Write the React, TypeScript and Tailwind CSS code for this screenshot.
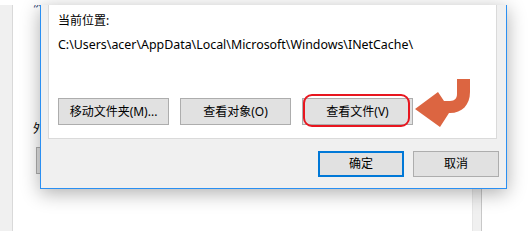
import React from 'react';

const font = 'font-["Segoe_UI","Noto_Sans","Noto_Sans_CJK_SC",sans-serif]';

function WinButton({
  label,
  className = '',
  border = 'border border-[#adadad]',
}: {
  label: string;
  className?: string;
  border?: string;
}) {
  return (
    <div
      className={`flex items-center justify-center bg-[#e1e1e1] ${border} text-[12px] leading-none text-black ${className}`}
    >
      {label}
    </div>
  );
}

function ReturnArrow() {
  return (
    <svg className="absolute left-[410px] top-[74px]" width="66" height="58" viewBox="0 0 66 58">
      <path
        d="M47 5 L60 5 L60 18 C60 31 52 39 40 39 L39 39 L30 53 L5 35 L28 18 L34 27 L40 27 C45 27 47 24 47 20 Z"
        fill="#dc6541"
      />
    </svg>
  );
}

export default function App() {
  return (
    <div className={`relative w-[529px] h-[231px] overflow-hidden bg-white pt-[5px] ${font}`}>
      {/* window behind the dialog */}
      <div className="flex w-[482px] h-[226px]">
        <div className="w-[13px] bg-[#f0f0f0] border-r border-[#d9d9d9]" />
        <div className="flex-1 bg-white pl-[20px] flex flex-col">
          <div className="h-[6px] overflow-hidden">
            <div className="-mt-[10px] text-[12px] leading-[16px] text-[#1e3a6e]">浏</div>
          </div>
          <div className="mt-[110px] text-[12px] leading-[16px] text-black">外观</div>
          <div className="mt-[10px] ml-[3px] w-[60px] h-[27px] bg-[#e1e1e1] border border-[#adadad]" />
        </div>
        <div className="w-[10px] bg-[#f0f0f0] border-x border-l-[#e6e6e6] border-r-[#c8c8c8]" />
      </div>

      {/* dialog */}
      <div className="absolute left-[40px] top-[5px] w-[467px] h-[184px] bg-[#f0f0f0] border-x border-b border-[#2a8ff2] shadow-[0_4px_18px_rgba(0,0,0,0.32)] flex flex-col">
        <div className="ml-[7px] mr-[9px] h-[134px] bg-white border-x border-b border-[#dadada] pl-[9px] pt-[8px] flex flex-col">
          <div className="text-[12px] leading-[16px] text-black">当前位置:</div>
          <div className="mt-[8px] text-[12.4px] leading-[16px] text-black">
            C:\Users\acer\AppData\Local\Microsoft\Windows\INetCache\
          </div>
          <div className="mt-[45px] flex gap-[11px]">
            <WinButton label="移动文件夹(M)..." className="w-[111px] h-[27px]" />
            <WinButton label="查看对象(O)" className="w-[111px] h-[27px]" />
            <div className="relative">
              <WinButton label="查看文件(V)" className="w-[111px] h-[27px]" />
              <div className="absolute -top-[4px] left-[1px] w-[107px] h-[33px] border-2 border-[#e8161f] rounded-[9px]" />
            </div>
          </div>
        </div>
        <div className="mt-[12px] pr-[7px] flex justify-end gap-[9px]">
          <WinButton label="确定" className="w-[86px] h-[26px]" border="border-2 border-[#0078d7]" />
          <WinButton label="取消" className="w-[86px] h-[26px]" />
        </div>
      </div>

      <ReturnArrow />
    </div>
  );
}
